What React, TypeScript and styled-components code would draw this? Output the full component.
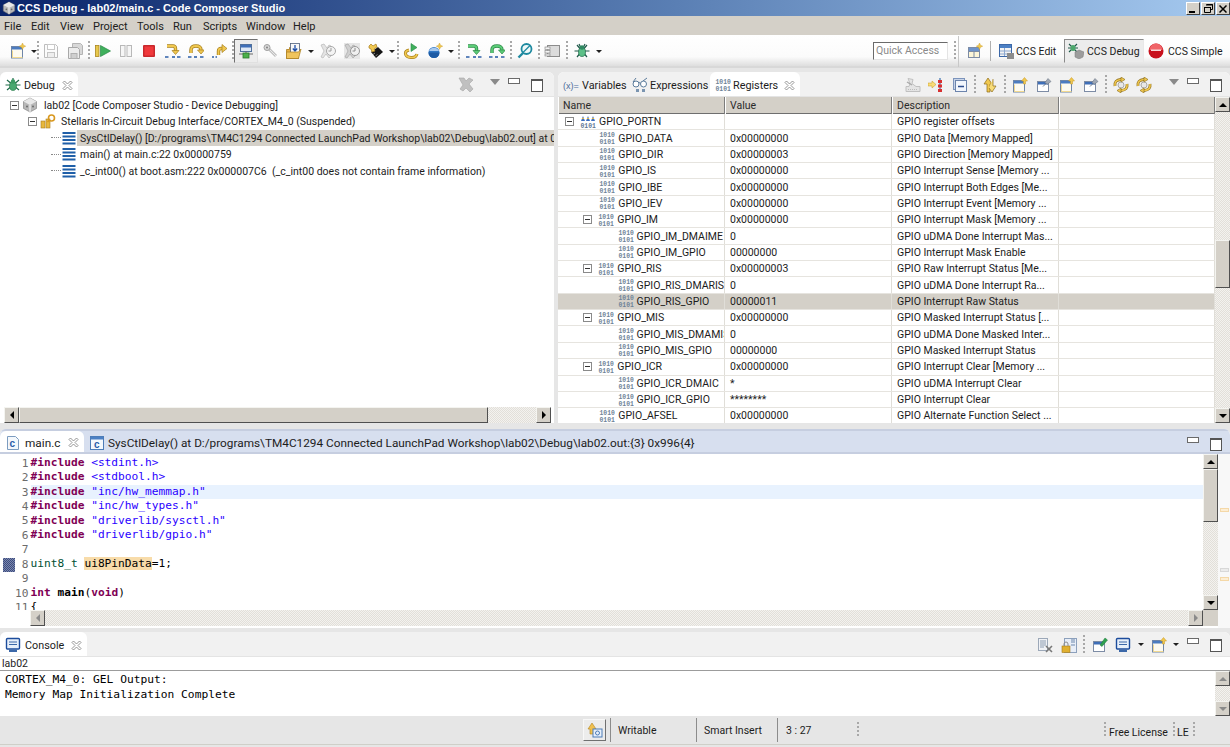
import React from 'react';
import styled, { createGlobalStyle } from 'styled-components';

const GlobalStyle = createGlobalStyle`
  html, body {
    margin: 0;
    padding: 0;
    background: #e6e6e6;
    overflow: hidden;
  }
  * { box-sizing: border-box; }
  #root { width: 1230px; height: 747px; }
`;

const UI = `"Roboto", "Liberation Sans", sans-serif`;
const MONO = `"DejaVu Sans Mono", "Liberation Mono", monospace`;

const Page = styled.div`
  width: 1230px;
  height: 747px;
  display: flex;
  flex-direction: column;
  background: #e6e6e6;
  font-family: ${UI};
  font-size: 10.5px;
  color: #1c1c1c;
  overflow: hidden;
`;

/* ---------- icons ---------- */

const Svg = ({ children, size = 16 }: any) => (
  <svg width={size} height={size} viewBox="0 0 16 16" style={{ display: 'block', flex: 'none' }}>
    {children}
  </svg>
);

const bits = (fill: string) => (
  <g fontFamily="Liberation Mono, monospace" fontSize="6.4" fontWeight="700" fill={fill}>
    <text x="0.5" y="7">1010</text>
    <text x="0.5" y="14">0101</text>
  </g>
);

// outlined arrow used by the step buttons
const Arrow = ({ d, head, fill, line }: { d: string; head: string; fill: string; line: string }) => (
  <>
    <path d={d} fill="none" stroke={line} strokeWidth="3.4" />
    <path d={d} fill="none" stroke={fill} strokeWidth="1.8" />
    <path d={head} fill={fill} stroke={line} strokeWidth=".7" />
  </>
);

const dashes = <path d="M0 14h3.500M12 14h3.500" stroke="#2d5fa8" strokeWidth="1.6" />;

const window16 = (
  <>
    <rect x="1.500" y="3.500" width="11" height="11.500" fill="#fdfaf0" stroke="#6f86a8" />
    <rect x="2" y="4" width="10" height="2.500" fill="#4c7cc0" />
    <path d="M12.500 14.500h-10v-7" fill="none" stroke="#f0d890" />
  </>
);

const star = <path d="M12.500 0l1 2.200 2.200 1-2.200 1-1 2.200-1-2.200-2.200-1 2.200-1z" fill="#f0c850" stroke="#c89820" strokeWidth=".4" />;

const icons: Record<string, React.ReactNode> = {
  newfile: <>{window16}{star}</>,
  save: (
    <>
      <path d="M1.500 1.500h11l2 2v11h-13z" fill="#fbfbfb" stroke="#bcbcbc" />
      <rect x="4.500" y="1.500" width="7" height="5" fill="#fff" stroke="#c8c8c8" />
      <rect x="4.500" y="9.500" width="7" height="5" fill="#eee" stroke="#c4c4c4" />
    </>
  ),
  saveall: (
    <>
      <path d="M5.500 .5h8l2 2v9h-10z" fill="#d8d8d8" stroke="#b4b4b4" />
      <path d="M1.500 4.500h9l2 2v9h-11z" fill="#ececec" stroke="#a8a8a8" />
      <rect x="4" y="10.500" width="6" height="5" fill="#cfcfcf" stroke="#b0b0b0" />
    </>
  ),
  resume: (
    <>
      <rect x=".5" y="2.500" width="3.500" height="11" fill="#e8c84c" stroke="#a88420" strokeWidth=".8" />
      <path d="M5.500 2.500l10 5.500-10 5.500z" fill="#3fb05c" stroke="#2b8a46" strokeWidth=".7" />
    </>
  ),
  pause: (
    <>
      <rect x="2.500" y="2.500" width="4.500" height="11" fill="#f6f6f6" stroke="#b8b8b8" />
      <rect x="9" y="2.500" width="4.500" height="11" fill="#f6f6f6" stroke="#b8b8b8" />
    </>
  ),
  stop: (
    <>
      <rect x="2" y="2" width="12" height="12" rx="1" fill="#c8282c" />
      <rect x="3.500" y="3.500" width="9" height="9" fill="#f0393c" />
    </>
  ),
  into: (
    <>
      <Arrow d="M2 3h6q2.500 0 2.500 2.500V8" head="M7 7.500h7l-3.500 4z" fill="#f0c850" line="#a8801c" />
      {dashes}
      <path d="M7 14h3" stroke="#2d5fa8" strokeWidth="1.600" />
    </>
  ),
  over: (
    <>
      <Arrow d="M3 10V7q0-4 5-4t5 4" head="M9.500 7h7l-3.500 4z" fill="#f0c850" line="#a8801c" />
      {dashes}
      <path d="M6 14h3" stroke="#2d5fa8" strokeWidth="1.600" />
    </>
  ),
  ret: (
    <>
      <Arrow d="M6.500 12V8q0-2.500 2.500-2.500h1" head="M10 1.500l5 4-5 4z" fill="#f0c850" line="#a8801c" />
      <path d="M0 14h2M3.500 14h1.500" stroke="#2d5fa8" strokeWidth="1.600" />
    </>
  ),
  target: (
    <>
      <rect x="2.500" y="1.500" width="11" height="7" fill="#dfe8f4" stroke="#50709c" />
      <rect x="3" y="2" width="10" height="2.500" fill="#3f6fb8" />
      <path d="M1 11h14M8 8v3" stroke="#6a6a6a" />
      <rect x="5" y="10" width="6" height="5" fill="#4cb04c" stroke="#2a7a2a" strokeWidth=".8" />
    </>
  ),
  wrench: (
    <>
      <path d="M6 5l8 8" stroke="#c0c0c0" strokeWidth="3" />
      <path d="M6 5l8 8" stroke="#e8e8e8" strokeWidth="1" />
      <circle cx="5" cy="4.500" r="3" fill="#d8d8d8" stroke="#a0a0a0" />
      <circle cx="5" cy="4.500" r="1" fill="#808080" />
    </>
  ),
  load: (
    <>
      <path d="M.5 6.500h3v-2h9v11h-12z" fill="#e8b040" stroke="#a87c20" strokeWidth=".8" />
      <rect x="4.500" y=".5" width="9" height="10" fill="#f8f8f8" stroke="#50607c" strokeWidth=".8" />
      <path d="M9 2v6M6.800 5.500L9 8l2.200-2.500" stroke="#1f4fa8" fill="none" strokeWidth="1.300" />
      <path d="M.5 9h12l2.500-3-2.500 9.500h-12z" fill="#f0c45c" stroke="#a87c20" strokeWidth=".7" />
    </>
  ),
  grayx1: (
    <>
      <path d="M1 2l3-1 3 4 2-3 2 1-3 5 3 5-2 2-3-4-3 4-2-1 3-6z" fill="#e4e4e4" stroke="#b8b8b8" strokeWidth=".7" />
      <circle cx="11" cy="8" r="4.500" fill="#f4f4f4" stroke="#a8a8a8" />
      <path d="M11 5v3h-2.500" fill="none" stroke="#9c9c9c" />
    </>
  ),
  grayx2: (
    <>
      <rect x="0" y="0" width="16" height="16" fill="#e6e6e6" />
      <path d="M1 2l3-1 3 4 2-3 2 1-3 5 3 5-2 2-3-4-3 4-2-1 3-6z" fill="#d0d0d0" stroke="#a8a8a8" strokeWidth=".7" />
      <circle cx="11" cy="8" r="4.500" fill="#f0f0f0" stroke="#989898" />
      <path d="M11 5v3h-2.500" fill="none" stroke="#8c8c8c" />
    </>
  ),
  chip: (
    <>
      <path d="M3 9l7-5 5 5-7 6z" fill="#161616" />
      <path d="M5 11.500l2-1.500M7.500 13l2-1.500" stroke="#888" />
      <path d="M1 3l2-2 2 2 3-2 1 3-3 2 1 2-3 1-1-3-2-1z" fill="#f0c850" stroke="#a87c20" strokeWidth=".7" />
    </>
  ),
  restart: (
    <>
      <path d="M8 .5l6 4-6 4z" fill="#3fb05c" stroke="#2b8a46" strokeWidth=".6" />
      <path d="M6 7q-4 1-3.500 4t5.500 3.500 6-3.500" fill="none" stroke="#a8801c" strokeWidth="3" />
      <path d="M6 7q-4 1-3.500 4t5.500 3.500 6-3.500" fill="none" stroke="#f0c850" strokeWidth="1.600" />
    </>
  ),
  ball: (
    <>
      <circle cx="7" cy="9.500" r="5.500" fill="#2f76c4" />
      <path d="M1.500 9.500h11a5.500 5.500 0 0 1-11 0" fill="#1c5aa4" />
      <path d="M2 8a5.500 5.500 0 0 1 10 0z" fill="#a8c8ec" />
      {star}
    </>
  ),
  asmInto: (
    <>
      <Arrow d="M2 3h6q2.500 0 2.500 2.500V8" head="M7 7.500h7l-3.500 4z" fill="#5ccc78" line="#2b8a46" />
      {dashes}
      <path d="M7 14h3" stroke="#2d5fa8" strokeWidth="1.600" />
    </>
  ),
  asmOver: (
    <>
      <Arrow d="M3 10V7q0-4 5-4t5 4" head="M9.500 7h7l-3.500 4z" fill="#5ccc78" line="#2b8a46" />
      {dashes}
      <path d="M6 14h3" stroke="#2d5fa8" strokeWidth="1.600" />
    </>
  ),
  search: (
    <>
      <circle cx="9.500" cy="6" r="5" fill="#f0fafa" stroke="#1e8aa0" strokeWidth="1.800" />
      <path d="M6 10L1.500 14.500" stroke="#1e8aa0" strokeWidth="2.400" />
      <path d="M13 2.500L6 9.500" stroke="#1e8aa0" strokeWidth="1.200" />
    </>
  ),
  note: (
    <>
      <rect x="3.500" y="2.500" width="12" height="11" fill="#dcdcdc" stroke="#8c8c8c" />
      <rect x="1" y="4" width="5" height="2.500" fill="#f4f4f4" stroke="#8c8c8c" strokeWidth=".7" />
      <rect x="1" y="7.500" width="5" height="2.500" fill="#f4f4f4" stroke="#8c8c8c" strokeWidth=".7" />
      <rect x="1" y="11" width="5" height="2" fill="#f4f4f4" stroke="#8c8c8c" strokeWidth=".7" />
    </>
  ),
  bug: (
    <>
      <path d="M3 2l10 12M13 2L3 14M.5 8h15M5 1l1.500 3M11 1L9.500 4" stroke="#1f5a4a" strokeWidth="1.200" />
      <ellipse cx="8" cy="9" rx="3.500" ry="4.500" fill="#5cc088" stroke="#1f6a4a" strokeWidth=".7" />
      <circle cx="8" cy="4.500" r="2.200" fill="#2f8a62" />
    </>
  ),
  persp: (
    <>
      <rect x="1.500" y="4.500" width="11" height="10" fill="#fdf6d8" stroke="#7d8ca5" />
      <path d="M1.500 8.500h11M7 8.500v6" stroke="#7d8ca5" />
      <rect x="2" y="5" width="10" height="3" fill="#6e94cc" />
      {star}
    </>
  ),
  edit: (
    <>
      <rect x="1.500" y="1.500" width="12" height="12" fill="#f4f4f4" stroke="#3c68a8" />
      <rect x="2" y="2" width="11" height="3" fill="#4c80c4" />
      <path d="M6.500 5v8M2 8h11M2 11h11" stroke="#8ca8d0" />
      <rect x="9" y="10" width="7" height="6" fill="#8c8c8c" />
    </>
  ),
  debugP: (
    <>
      <path d="M1 1l8 8M9 1L1 9M0 5h10" stroke="#1f5a4a" strokeWidth="1.100" />
      <ellipse cx="5" cy="5" rx="2.500" ry="3" fill="#4ca86c" />
      <path d="M7 9l4-2 5 2-1 5-4 2-4-2z" fill="#9c9c9c" stroke="#787878" strokeWidth=".5" />
    </>
  ),
  simple: (
    <>
      <circle cx="8" cy="8" r="7.500" fill="#c8101c" />
      <path d="M1.500 7a6.500 6.500 0 0 1 13 0z" fill="#f06468" />
      <rect x="3" y="6.500" width="10" height="1.500" fill="#f8d8d8" />
    </>
  ),
  bug16: (
    <>
      <path d="M2 3l12 10M14 3L2 13M0.500 8h15M8 1v3" stroke="#1f6a4a" strokeWidth="1.200" />
      <ellipse cx="8" cy="9" rx="3.500" ry="4.500" fill="#48a870" stroke="#2a7a4a" strokeWidth=".6" />
      <circle cx="8" cy="4.500" r="2.200" fill="#3a9a62" />
    </>
  ),
  grayx: (
    <path d="M1 1h5l2 3 3-3 4 2-4 4 4 5-3 3-4-4-3 3-3-2 3-4z" fill="#c0c0c0" stroke="#a4a4a4" strokeWidth=".6" />
  ),
  glasses: (
    <>
      <circle cx="4" cy="7" r="3" fill="#fff" stroke="#5c7c9c" />
      <circle cx="11.500" cy="7" r="3" fill="#fff" stroke="#5c7c9c" />
      <path d="M7 6q1-1 1.500 0M1 5l3-4M11 4l4-3" stroke="#5c7c9c" fill="none" />
      <path d="M4 12h3v3H4zM10 12h3v3h-3z" fill="#7a94b0" />
    </>
  ),
  reg: bits('#6f8498'),
  regGroup: (
    <>
      <path d="M1 7l2-5 2 5zM6 7l2-5 2 5zM11 7l2-5 2 5z" fill="#3d6fc0" />
      <path d="M2 4.500h2M7 4.500h2M12 4.500h2" stroke="#e8b83c" />
      <g fontFamily="Liberation Mono, monospace" fontSize="6.400" fontWeight="700" fill="#5f7896">
        <text x="0.500" y="14">0101</text>
      </g>
    </>
  ),
  regOff: (
    <>
      <path d="M3 1.500l5 1-1 4 4 3h4v5H1v-5h3l1-3z" fill="#e4e4e4" stroke="#c0c0c0" />
      <path d="M3 12.500h9" stroke="#bcbcbc" strokeDasharray="1 1" />
      <path d="M2 5l5 3" stroke="#a8a8a8" strokeWidth="1.400" />
    </>
  ),
  arrowTree: (
    <>
      <path d="M0 6h4V4l4 3.500L4 11V9H0z" fill="#f8dc78" stroke="#c89820" strokeWidth=".5" />
      <path d="M12 1v14" stroke="#3a6fb0" strokeWidth="1.200" />
      <rect x="10" y="3" width="4" height="3" fill="#d83030" />
      <rect x="10" y="7.500" width="4" height="3" fill="#d83030" />
      <rect x="10" y="12" width="4" height="3" fill="#d83030" />
    </>
  ),
  collapse: (
    <>
      <rect x="1.500" y="1.500" width="11" height="11" fill="#c8d4e8" stroke="#7c94bc" />
      <rect x="3.500" y="3.500" width="11" height="11" fill="#f2f6fc" stroke="#6c84ac" />
      <path d="M6 9.500h6" stroke="#2c4c8c" strokeWidth="1.600" />
    </>
  ),
  sync: (
    <>
      <path d="M5 15V7H2l4-6 4 6H8v8z" fill="#f0c850" stroke="#8c6c18" strokeWidth=".7" />
      <path d="M11 2v7h3l-4 6-3-4" fill="#f8dc78" stroke="#8c6c18" strokeWidth=".7" />
    </>
  ),
  newgroup: <>{window16}<path d="M12.500 .5l3 3.500h-2v3h-2V4h-2z" fill="#f0c850" stroke="#c89820" strokeWidth=".5" /></>,
  pin: (
    <>
      <rect x="1.500" y="4.500" width="11" height="10" fill="#fff" stroke="#7d8ca5" />
      <rect x="2" y="5" width="10" height="2.500" fill="#3f6fb8" />
      <path d="M7 9.500l3-3-1-1 3-4 3 3-4 3-1-1-3 3z" fill="#a0a8b4" stroke="#5c6878" strokeWidth=".5" />
    </>
  ),
  pinGreen: (
    <>
      <rect x="1.500" y="4.500" width="11" height="10" fill="#fff" stroke="#7d8ca5" />
      <rect x="2" y="5" width="10" height="2.500" fill="#3f6fb8" />
      <path d="M8 8l5-7 2.500 2L10 9.500z" fill="#2fa050" stroke="#1f7a38" strokeWidth=".5" />
    </>
  ),
  refresh: (
    <>
      <circle cx="8" cy="8" r="3" fill="#e8e8e8" stroke="#a8a8a8" />
      <path d="M2 9Q1 3 8 2.500" fill="none" stroke="#8c6c18" strokeWidth="2.800" />
      <path d="M2 9Q1 3 8 2.500" fill="none" stroke="#f0c850" strokeWidth="1.500" />
      <path d="M14 7q1 6-6 6.500" fill="none" stroke="#8c6c18" strokeWidth="2.800" />
      <path d="M14 7q1 6-6 6.500" fill="none" stroke="#f0c850" strokeWidth="1.500" />
      <path d="M8 0l4 2.500L8 5zM8 11l-4 2.500L8 16z" fill="#f0c850" stroke="#8c6c18" strokeWidth=".6" />
    </>
  ),
  clearLog: (
    <>
      <rect x="1.500" y="1.500" width="9" height="12" fill="#f0f2f6" stroke="#9ca8b8" />
      <path d="M3 4h6M3 6h6M3 8h6M3 10h4" stroke="#8c9cb0" />
      <path d="M9 9l6 6M15 9l-6 6" stroke="#787878" strokeWidth="1.600" />
    </>
  ),
  scrollLock: (
    <>
      <rect x="3.500" y="1.500" width="12" height="14" fill="#e8eef8" stroke="#8ca0bc" />
      <path d="M10 3h4M10 5h4M10 8h4" stroke="#6c88ac" />
      <rect x="1" y="9" width="8" height="6.500" fill="#e0b030" stroke="#a47a18" strokeWidth=".6" />
      <path d="M3 9V7a2 2 0 0 1 4 0v2" fill="none" stroke="#8c8c8c" />
    </>
  ),
  console: (
    <>
      <rect x="1.500" y="1.500" width="13" height="10.500" rx="1" fill="#e8f0fa" stroke="#1c4c9c" strokeWidth="1.400" />
      <path d="M4 5h8M4 7.500h8" stroke="#3c68a8" />
      <rect x="4" y="12.500" width="8" height="2.500" fill="#3c68a8" />
    </>
  ),
  switchWs: (
    <>
      <path d="M1 7l4-6 4 6H7v5H3V7z" fill="#f0c050" stroke="#b08420" strokeWidth=".6" />
      <rect x="6" y="7" width="9" height="8" fill="#e8f0fa" stroke="#4c7cb8" />
      <circle cx="10.500" cy="11" r="2" fill="none" stroke="#4c7cb8" />
    </>
  ),
  cfile: (
    <>
      <path d="M2.500 1.500h8l3 3v10h-11z" fill="#f4f8fc" stroke="#7c9cc0" />
      <text x="4.500" y="12" fontSize="10" fontWeight="700" fontFamily="Liberation Sans, sans-serif" fill="#2a5ca8">c</text>
    </>
  ),
  cwin: (
    <>
      <rect x="1.500" y="1.500" width="13" height="13" fill="#f4f8fc" stroke="#4c7cb8" />
      <rect x="2" y="2" width="12" height="2.500" fill="#4c80c4" />
      <text x="5" y="13" fontSize="10" fontWeight="700" fontFamily="Liberation Sans, sans-serif" fill="#2a5ca8">c</text>
    </>
  ),
  cube: (
    <>
      <path d="M8 1l6.500 3.500v7L8 15l-6.500-3.500v-7z" fill="#b8b8b8" stroke="#787878" strokeWidth=".6" />
      <path d="M1.500 4.500L8 8l6.500-3.500L8 1z" fill="#e8e8e8" />
      <path d="M8 8v7" stroke="#fff" />
      <circle cx="5" cy="9.500" r="1" fill="#6c6c6c" />
      <circle cx="11" cy="9.500" r="1" fill="#6c6c6c" />
    </>
  ),
  thread: (
    <>
      <rect x="1" y="7" width="4" height="7" fill="#e8b83c" stroke="#a87c20" strokeWidth=".6" />
      <rect x="6" y="5" width="4" height="9" fill="#e8b83c" stroke="#a87c20" strokeWidth=".6" />
      <circle cx="11.500" cy="4" r="3" fill="none" stroke="#d89820" strokeWidth="1.600" />
      <path d="M9.500 6l-2 2" stroke="#d89820" strokeWidth="1.600" />
    </>
  ),
  frame: <path d="M1.500 3h13M1.500 6.500h13M1.500 10h13M1.500 13.500h13" stroke="#1f5fa8" strokeWidth="2" />,
  vars: (
    <text x="0" y="11" fontSize="8.500" fontFamily="Liberation Sans, sans-serif" fill="#4c6c9c">(x)=</text>
  ),
};

const Icon = ({ n, size }: { n: string; size?: number }) => <Svg size={size}>{icons[n]}</Svg>;

/* ---------- title + menu ---------- */

const TitleBar = styled.div`
  height: 16px;
  flex: none;
  display: flex;
  align-items: center;
  padding-left: 2px;
  gap: 1px;
  background: linear-gradient(90deg, #0a246a 0%, #5a7fb4 55%, #a6caf0 100%);
  color: #fff;
  font-family: "Liberation Sans", sans-serif;
  font-weight: 700;
  font-size: 11px;
`;

const TitleText = styled.span`
  flex: 1;
  white-space: nowrap;
`;

const WinButtons = styled.div`
  display: flex;
  gap: 1px;
  align-self: flex-start;
  margin-top: 2px;
`;

const WinButton = styled.div`
  width: 14px;
  height: 13px;
  background: #d4d0c8;
  border: 1px solid;
  border-color: #fff #404040 #404040 #fff;
  display: flex;
  align-items: center;
  justify-content: center;
`;

const MenuBar = styled.div`
  height: 19px;
  flex: none;
  display: flex;
  align-items: center;
  padding: 1px 0 0 4px;
  background: #d4d0c8;
  font-size: 11px;
`;

const MenuItem = styled.span<{ $w: number }>`
  width: ${(p) => p.$w}px;
  flex: none;
  color: #202020;
`;

/* ---------- main toolbar ---------- */

const Toolbar = styled.div`
  height: 33px;
  flex: none;
  display: flex;
  align-items: center;
  background: linear-gradient(180deg, #ffffff 0%, #fbfbfb 70%, #dedede 100%);
  border-bottom: 2px solid #d8d8d8;
  padding: 1px 0 0 6px;
`;

const Tool = styled.div<{ $w?: number; $on?: boolean }>`
  width: ${(p) => p.$w ?? 23.4}px;
  height: ${(p) => (p.$on ? 24 : 20)}px;
  flex: none;
  display: flex;
  align-items: center;
  justify-content: center;
  ${(p) => p.$on && 'background: #ececec; border: 1px solid; border-color: #707070 #e0e0e0 #e0e0e0 #707070;'}
`;

const Drop = styled.div<{ $w?: number }>`
  width: ${(p) => p.$w ?? 9}px;
  flex: none;
  display: flex;
  justify-content: center;
  &::after {
    content: '';
    border-left: 3px solid transparent;
    border-right: 3px solid transparent;
    border-top: 3px solid #202020;
  }
`;

const Grip = styled.div<{ $w: number }>`
  width: ${(p) => p.$w}px;
  height: 20px;
  flex: none;
  display: flex;
  justify-content: center;
  &::after {
    content: '';
    width: 2px;
    height: 100%;
    background: repeating-linear-gradient(180deg, #a8a8a8 0 2px, transparent 2px 4px);
  }
`;

const Grow = styled.div`
  flex: 1;
`;

const QuickAccess = styled.div`
  width: 75px;
  height: 18px;
  margin-right: 5px;
  flex: none;
  background: #fff;
  border: 1px solid;
  border-color: #6a6a6a #e4e4e4 #e4e4e4 #6a6a6a;
  color: #8a8a8a;
  padding-left: 2px;
  line-height: 16px;
`;

const PerspectiveBar = styled.div`
  display: flex;
  align-items: center;
  height: 31px;
  margin-left: 2px;
  padding-left: 8px;
  width: 272px;
  flex: none;
  border-left: 1px solid #c8c8c8;
`;

const Divider = styled.div<{ $m?: number }>`
  width: 1px;
  height: 20px;
  flex: none;
  background: #b0b0b0;
  margin: 0 ${(p) => p.$m ?? 8}px;
`;

const Perspective = styled.div<{ $on?: boolean; $w: number; $pad: number }>`
  width: ${(p) => p.$w}px;
  height: 24px;
  flex: none;
  display: flex;
  align-items: center;
  gap: ${(p) => (p.$pad === 0 ? 2 : p.$pad)}px;
  padding-left: ${(p) => p.$pad}px;
  white-space: nowrap;
  ${(p) => p.$on && 'background: #ececec; border: 1px solid; border-color: #8a8a8a #e8e8e8 #e8e8e8 #8a8a8a;'}
`;

/* ---------- views ---------- */

const TopRow = styled.div`
  height: 351px;
  margin-top: 4px;
  flex: none;
  display: flex;
  gap: 4px;
`;

const View = styled.div<{ $w?: number }>`
  ${(p) => (p.$w ? `width: ${p.$w}px; flex: none;` : 'flex: 1; min-width: 0;')}
  display: flex;
  flex-direction: column;
  background: #fff;
  border-radius: 6px 6px 0 0;
  overflow: hidden;
`;

const TabBar = styled.div<{ $blue?: boolean }>`
  height: 25px;
  flex: none;
  display: flex;
  align-items: stretch;
  background: ${(p) => (p.$blue ? '#d7dfef' : '#f1f1f1')};
  ${(p) => (p.$blue ? 'border-top: 2px solid #c6cee0; border-bottom: 2px solid #c6cee0;' : 'border-bottom: 1px solid #e4e4e4;')}
`;

const Tab = styled.div<{ $on?: boolean; $w?: number; $gap?: number; $blue?: boolean }>`
  ${(p) => (p.$w ? `width: ${p.$w}px;` : '')}
  flex: none;
  display: flex;
  align-items: center;
  gap: ${(p) => p.$gap ?? 3}px;
  padding: 2px 0 0 5px;
  white-space: nowrap;
  font-size: ${(p) => (p.$blue ? 11.8 : 10.8)}px;
  ${(p) => p.$on && 'background: #fff; border-radius: 6px 6px 0 0;'}
`;

const TabClose = styled.span`
  margin-left: auto;
  margin-right: 5px;
  display: flex;
`;

const CloseX = () => (
  <svg width="11" height="11" viewBox="0 0 11 11" style={{ display: 'block' }}>
    <path d="M1 2.500L2.500 1 5.500 4 8.500 1 10 2.500 7 5.500 10 8.500 8.500 10 5.500 7 2.500 10 1 8.500 4 5.500z" fill="#fff" stroke="#7c7c7c" strokeWidth=".8" />
  </svg>
);

const ViewTools = styled.div<{ $r?: number }>`
  margin-left: auto;
  padding: 1px ${(p) => p.$r ?? 3}px 0 0;
  display: flex;
  align-items: center;
`;

const ViewMenu = styled.div`
  width: 15px;
  flex: none;
  display: flex;
  justify-content: center;
  align-self: flex-start;
  margin-top: 6px;
  &::after {
    content: '';
    width: 0;
    height: 0;
    border-left: 5px solid transparent;
    border-right: 5px solid transparent;
    border-top: 6px solid #8a8a8a;
  }
`;

const MinBtn = styled.div`
  width: 23px;
  flex: none;
  display: flex;
  justify-content: center;
  align-self: flex-start;
  margin-top: 5px;
  &::after {
    content: '';
    width: 10px;
    height: 4px;
    background: #fff;
    border: 1px solid #6a6a6a;
  }
`;

const MaxBtn = styled.div`
  width: 23px;
  flex: none;
  display: flex;
  justify-content: center;
  align-self: flex-start;
  margin-top: 6px;
  &::after {
    content: '';
    width: 10px;
    height: 10px;
    background: #fff;
    border: 1px solid #555;
    border-top-width: 2px;
  }
`;

const Body = styled.div`
  flex: 1;
  min-height: 0;
  display: flex;
  flex-direction: column;
  background: #fff;
`;

/* ---------- debug tree ---------- */

const TreeArea = styled.div`
  flex: 1;
  min-height: 0;
  overflow: hidden;
`;

const TreeRow = styled.div<{ $indent: number }>`
  height: 16.4px;
  display: flex;
  align-items: center;
  padding-left: ${(p) => p.$indent}px;
  white-space: nowrap;
`;

const TreeLabel = styled.span<{ $sel?: boolean }>`
  flex: 1;
  min-width: 0;
  overflow: hidden;
  height: 16.4px;
  line-height: 17px;
  padding-left: 3px;
  ${(p) => p.$sel && 'background: #d4d0c8;'}
`;

const Twist = styled.div`
  width: 9px;
  height: 9px;
  flex: none;
  border: 1px solid #8a8a8a;
  background: #fff;
  position: relative;
  &::after {
    content: '';
    position: absolute;
    left: 1px;
    right: 1px;
    top: 3px;
    height: 1px;
    background: #333;
  }
`;

const Dots = styled.div<{ $w: number }>`
  width: ${(p) => p.$w}px;
  flex: none;
  border-top: 1px dotted #8a8a8a;
`;

/* ---------- scrollbars ---------- */

const track = `background: repeating-conic-gradient(#e2dfd9 0 25%, #f3f2ef 0 50%) 0 0 / 2px 2px;`;

const VBar = styled.div`
  width: 15px;
  flex: none;
  display: flex;
  flex-direction: column;
  ${track}
`;

const HBar = styled.div`
  height: 16px;
  flex: none;
  display: flex;
  ${track}
`;

const DebugHBar = styled(HBar)`
  margin: 0 3px 0 4px;
`;

const EditorHBar = styled(HBar)`
  margin-left: 30px;
`;

const Thumb = styled.div`
  background: #d4d0c8;
  border: 1px solid;
  border-color: #f4f4f0 #505050 #505050 #f4f4f0;
`;

const ScrollBtn = styled(Thumb)<{ $dir: 'u' | 'd' | 'l' | 'r'; $off?: boolean }>`
  width: ${(p) => (p.$dir === 'u' || p.$dir === 'd' ? '100%' : '15px')};
  height: ${(p) => (p.$dir === 'u' || p.$dir === 'd' ? '15px' : '100%')};
  flex: none;
  display: flex;
  align-items: center;
  justify-content: center;
  &::after {
    content: '';
    width: 0;
    height: 0;
    ${(p) => {
      const c = p.$off ? '#8a8a8a' : '#000';
      if (p.$dir === 'u') return `border: 4px solid transparent; border-top: 0; border-bottom-color: ${c};`;
      if (p.$dir === 'd') return `border: 4px solid transparent; border-bottom: 0; border-top-color: ${c};`;
      if (p.$dir === 'l') return `border: 4px solid transparent; border-left: 0; border-right-color: ${c};`;
      return `border: 4px solid transparent; border-right: 0; border-left-color: ${c};`;
    }}
  }
`;

const VThumb = styled(Thumb)<{ $top: number; $h: number }>`
  flex: none;
  width: 100%;
  margin-top: ${(p) => p.$top}px;
  height: ${(p) => p.$h}px;
`;

const HThumb = styled(Thumb)<{ $w: number }>`
  flex: none;
  height: 100%;
  width: ${(p) => p.$w}px;
`;

const Corner = styled.div`
  width: 15px;
  flex: none;
  background: #d4d0c8;
`;

/* ---------- registers table ---------- */

const TableWrap = styled.div`
  flex: 1;
  min-height: 0;
  display: flex;
`;

const Table = styled.div`
  flex: 1;
  min-width: 0;
  overflow: hidden;
`;

const columns = `grid-template-columns: 167px 167px 167px 1fr;`;

const HeadRow = styled.div`
  height: 17px;
  display: grid;
  ${columns}
  background: #d4d0c8;
  border-bottom: 1px solid #6e6e6e;
`;

const HeadCell = styled.div`
  padding-left: 5px;
  line-height: 17px;
  border-right: 1px solid #7c7c7c;
  box-shadow: inset 1px 0 0 #fff;
  color: #2a2a2a;
`;

const Row = styled.div<{ $sel?: boolean }>`
  height: 16.35px;
  display: grid;
  ${columns}
  border-bottom: 1px solid #e6e4df;
  ${(p) => p.$sel && 'background: #d4d0c8;'}
`;

const Cell = styled.div`
  min-width: 0;
  overflow: hidden;
  white-space: nowrap;
  padding-left: 5px;
  line-height: 17px;
  border-right: 1px solid #e0ded8;
  display: flex;
  align-items: center;
`;

const NameCell = styled(Cell)<{ $level: number; $open: boolean }>`
  padding-left: ${(p) => p.$level * 18.3 + 23 - (p.$open ? 17 : 0)}px;
  gap: 3px;
`;

const TwistBox = styled.div`
  margin-right: 3px;
  margin-left: 1px;
  display: flex;
`;

/* ---------- editor ---------- */

const EditorView = styled(View)`
  height: 199px;
  flex: none;
  margin-top: 6px;
`;

const EditorBody = styled.div`
  flex: 1;
  min-height: 0;
  display: flex;
  background: #fff;
`;

const EditorMain = styled.div`
  flex: 1;
  min-width: 0;
  display: flex;
  flex-direction: column;
  padding-bottom: 2px;
`;

const EditorTop = styled.div`
  flex: 1;
  min-height: 0;
  display: flex;
`;

const Code = styled.div`
  flex: 1;
  min-width: 0;
  overflow: hidden;
  padding-top: 2px;
  font-family: ${MONO};
  font-size: 11.2px;
`;

const CodeLine = styled.div`
  height: 14.45px;
  display: flex;
  align-items: center;
  white-space: pre;
`;

const LineNo = styled.div<{ $bp?: boolean }>`
  width: 30.5px;
  flex: none;
  text-align: right;
  padding-right: 2px;
  color: #6c6c6c;
  position: relative;
  ${(p) =>
    p.$bp &&
    `&::before {
      content: '';
      position: absolute;
      left: 3px;
      top: 0;
      width: 12px;
      height: 14px;
      background: repeating-conic-gradient(#3c4c80 0 25%, #7c88ac 0 50%) 0 0 / 2px 2px;
    }`}
`;

const CodeText = styled.div<{ $hl?: boolean }>`
  flex: 1;
  height: 100%;
  line-height: 14.45px;
  color: #000;
  ${(p) => p.$hl && 'background: #e8f2fe;'}
`;

const Kw = styled.span`
  color: #7f0055;
  font-weight: 700;
`;

const Str = styled.span`
  color: #2a00ff;
`;

const TypeName = styled.span`
  color: #005032;
`;

const Occur = styled.span`
  background: #f8dcaa;
`;

const Bold = styled.span`
  font-weight: 700;
`;

const Ruler = styled.div`
  width: 12px;
  flex: none;
  background: #f8f8f8;
  display: flex;
  flex-direction: column;
  align-items: center;
`;

const RulerMark = styled.div<{ $top: number; $grey?: boolean }>`
  width: 9px;
  height: 4px;
  flex: none;
  margin-top: ${(p) => p.$top}px;
  background: ${(p) => (p.$grey ? '#ececec' : '#fdeed4')};
  border: 1px solid ${(p) => (p.$grey ? '#d8d8d8' : '#f4d8a8')};
`;

/* ---------- console + status ---------- */

const ConsoleView = styled(View)`
  height: 84px;
  flex: none;
  margin-top: 4px;
`;

const ConsoleName = styled.div`
  height: 13px;
  flex: none;
  line-height: 13px;
  padding-left: 2px;
  border-bottom: 1px solid #9c9c9c;
  background: #fff;
  box-sizing: content-box;
`;

const ConsoleBody = styled.div`
  flex: 1;
  min-height: 0;
  display: flex;
`;

const ConsoleText = styled.pre`
  flex: 1;
  margin: 0;
  padding: 2px 0 0 5px;
  font-family: ${MONO};
  font-size: 11.25px;
  line-height: 14.5px;
  color: #000;
`;

const StatusBar = styled.div`
  height: 29px;
  flex: none;
  display: flex;
  align-items: center;
  background: #e6e6e6;
  border-bottom: 1px solid #cfcfc8;
`;

const StatusBtn = styled.div`
  width: 23px;
  height: 22px;
  flex: none;
  margin: 0 4px 0 583px;
  background: #ececec;
  border: 1px solid;
  border-color: #f8f8f8 #707070 #707070 #f8f8f8;
  display: flex;
  align-items: center;
  justify-content: center;
`;

const StatusCell = styled.div<{ $w: number; $pad?: number }>`
  width: ${(p) => p.$w}px;
  height: 24px;
  flex: none;
  line-height: 26px;
  padding-left: ${(p) => p.$pad ?? 7}px;
  white-space: nowrap;
  border-left: 1px solid #8c8c8c;
`;

const StatusGrip = styled(Grip)`
  height: 16px;
`;

const StatusText = styled.div<{ $w: number; $pad: number }>`
  width: ${(p) => p.$w}px;
  flex: none;
  white-space: nowrap;
  padding: 4px 0 0 ${(p) => p.$pad}px;
`;

/* ---------- data ---------- */

const menus: [string, number][] = [
  ['File', 27], ['Edit', 29], ['View', 33], ['Project', 44], ['Tools', 36], ['Run', 30], ['Scripts', 43], ['Window', 47], ['Help', 30],
];

type Item = { i?: string; d?: number; g?: number; w?: number; on?: boolean };

const toolbarItems: Item[] = [
  { i: 'newfile', w: 24 }, { d: 7 }, { g: 2 },
  { i: 'save', w: 24 }, { i: 'saveall', w: 24 }, { g: 4 },
  { i: 'resume' }, { i: 'pause' }, { i: 'stop' }, { i: 'into' }, { i: 'over' }, { i: 'ret' }, { g: 3 },
  { i: 'target', w: 24, on: true }, { i: 'wrench', w: 24 }, { i: 'load' }, { d: 10 },
  { i: 'grayx1', w: 24 }, { i: 'grayx2', w: 24 }, { i: 'chip', w: 24 }, { d: 9 }, { g: 2 },
  { i: 'restart', w: 24 }, { i: 'ball', w: 24 }, { d: 9 }, { g: 6 },
  { i: 'asmInto', w: 24 }, { i: 'asmOver' }, { g: 4 },
  { i: 'search', w: 24 }, { g: 3 },
  { i: 'note', w: 24 }, { g: 6 },
  { i: 'bug', w: 24 }, { d: 9 },
];

const regTools: Item[] = [
  { i: 'regOff' }, { i: 'arrowTree' }, { i: 'collapse' }, { g: 7 },
  { i: 'sync' }, { g: 7 },
  { i: 'newgroup' }, { i: 'pin' }, { i: 'newgroup' }, { i: 'pin' }, { g: 7 },
  { i: 'refresh' }, { i: 'refresh' },
];

const consoleTools: Item[] = [
  { i: 'clearLog' }, { i: 'scrollLock' }, { g: 8 },
  { i: 'pinGreen' }, { i: 'console' }, { d: 12 }, { i: 'newgroup', w: 24 }, { d: 10 },
];

type Reg = { name: string; value: string; desc: string; level: number; open?: boolean; group?: boolean; sel?: boolean };

const regs: Reg[] = [
  { name: 'GPIO_PORTN', value: '', desc: 'GPIO register offsets', level: 0, open: true, group: true },
  { name: 'GPIO_DATA', value: '0x00000000', desc: 'GPIO Data [Memory Mapped]', level: 1 },
  { name: 'GPIO_DIR', value: '0x00000003', desc: 'GPIO Direction [Memory Mapped]', level: 1 },
  { name: 'GPIO_IS', value: '0x00000000', desc: 'GPIO Interrupt Sense [Memory ...', level: 1 },
  { name: 'GPIO_IBE', value: '0x00000000', desc: 'GPIO Interrupt Both Edges [Me...', level: 1 },
  { name: 'GPIO_IEV', value: '0x00000000', desc: 'GPIO Interrupt Event [Memory ...', level: 1 },
  { name: 'GPIO_IM', value: '0x00000000', desc: 'GPIO Interrupt Mask [Memory ...', level: 1, open: true },
  { name: 'GPIO_IM_DMAIME', value: '0', desc: 'GPIO uDMA Done Interrupt Mas...', level: 2 },
  { name: 'GPIO_IM_GPIO', value: '00000000', desc: 'GPIO Interrupt Mask Enable', level: 2 },
  { name: 'GPIO_RIS', value: '0x00000003', desc: 'GPIO Raw Interrupt Status [Me...', level: 1, open: true },
  { name: 'GPIO_RIS_DMARIS', value: '0', desc: 'GPIO uDMA Done Interrupt Ra...', level: 2 },
  { name: 'GPIO_RIS_GPIO', value: '00000011', desc: 'GPIO Interrupt Raw Status', level: 2, sel: true },
  { name: 'GPIO_MIS', value: '0x00000000', desc: 'GPIO Masked Interrupt Status [...', level: 1, open: true },
  { name: 'GPIO_MIS_DMAMIS', value: '0', desc: 'GPIO uDMA Done Masked Inter...', level: 2 },
  { name: 'GPIO_MIS_GPIO', value: '00000000', desc: 'GPIO Masked Interrupt Status', level: 2 },
  { name: 'GPIO_ICR', value: '0x00000000', desc: 'GPIO Interrupt Clear [Memory ...', level: 1, open: true },
  { name: 'GPIO_ICR_DMAIC', value: '*', desc: 'GPIO uDMA Interrupt Clear', level: 2 },
  { name: 'GPIO_ICR_GPIO', value: '********', desc: 'GPIO Interrupt Clear', level: 2 },
  { name: 'GPIO_AFSEL', value: '0x00000000', desc: 'GPIO Alternate Function Select ...', level: 1 },
];

const includes = ['<stdint.h>', '<stdbool.h>', '"inc/hw_memmap.h"', '"inc/hw_types.h"', '"driverlib/sysctl.h"', '"driverlib/gpio.h"'];

const renderTools = (items: Item[]) =>
  items.map((it, k) => {
    if (it.i) return <Tool key={k} $w={it.w} $on={it.on}><Icon n={it.i} /></Tool>;
    if (it.d) return <Drop key={k} $w={it.d} />;
    return <Grip key={k} $w={it.g ?? 3} />;
  });

export default function App() {
  return (
    <Page>
      <GlobalStyle />
      <TitleBar>
        <Icon n="cube" size={14} />
        <TitleText>CCS Debug - lab02/main.c - Code Composer Studio</TitleText>
        <WinButtons>
          <WinButton>
            <svg width="8" height="8" viewBox="0 0 8 8"><rect x="0" y="6" width="6" height="2" fill="#000" /></svg>
          </WinButton>
          <WinButton>
            <svg width="9" height="9" viewBox="0 0 9 9"><path d="M2.500.5h6v5h-2M.5 3.500h6v5h-6z" fill="none" stroke="#000" /><path d="M2 1h7M0 3.500h7" stroke="#000" /></svg>
          </WinButton>
          <WinButton>
            <svg width="8" height="8" viewBox="0 0 8 8"><path d="M.5.5l7 7M7.500.5l-7 7" stroke="#000" strokeWidth="1.500" /></svg>
          </WinButton>
        </WinButtons>
      </TitleBar>

      <MenuBar>
        {menus.map(([m, w]) => <MenuItem key={m} $w={w}>{m}</MenuItem>)}
      </MenuBar>

      <Toolbar>
        {renderTools(toolbarItems)}
        <Grow />
        <QuickAccess>Quick Access</QuickAccess>
        <Grip $w={3} />
        <PerspectiveBar>
          <Icon n="persp" />
          <Divider $m={7} />
          <Perspective $w={66} $pad={0}><Icon n="edit" />CCS Edit</Perspective>
          <Perspective $w={80} $pad={3} $on><Icon n="debugP" />CCS Debug</Perspective>
          <Perspective $w={76} $pad={4}><Icon n="simple" />CCS Simple</Perspective>
        </PerspectiveBar>
      </Toolbar>

      <TopRow>
        <View $w={554}>
          <TabBar>
            <Tab $on $w={78}>
              <Icon n="bug16" />Debug
              <TabClose><CloseX /></TabClose>
            </Tab>
            <ViewTools $r={6}>
              <Tool $w={20}><Icon n="grayx" /></Tool>
              <Tool $w={11} />
              <ViewMenu />
              <MinBtn />
              <MaxBtn />
            </ViewTools>
          </TabBar>
          <Body>
            <TreeArea>
              <TreeRow $indent={10}>
                <Twist /><Tool $w={22}><Icon n="cube" /></Tool>
                <TreeLabel>lab02 [Code Composer Studio - Device Debugging]</TreeLabel>
              </TreeRow>
              <TreeRow $indent={28}>
                <Twist /><Tool $w={21}><Icon n="thread" /></Tool>
                <TreeLabel>Stellaris In-Circuit Debug Interface/CORTEX_M4_0 (Suspended)</TreeLabel>
              </TreeRow>
              <TreeRow $indent={51}>
                <Dots $w={10} /><Tool $w={16}><Icon n="frame" /></Tool>
                <TreeLabel $sel>SysCtlDelay() [D:/programs\TM4C1294 Connected LaunchPad Workshop\lab02\Debug\lab02.out] at 0x00000996</TreeLabel>
              </TreeRow>
              <TreeRow $indent={51}>
                <Dots $w={10} /><Tool $w={16}><Icon n="frame" /></Tool>
                <TreeLabel>main() at main.c:22 0x00000759</TreeLabel>
              </TreeRow>
              <TreeRow $indent={51}>
                <Dots $w={10} /><Tool $w={16}><Icon n="frame" /></Tool>
                <TreeLabel>_c_int00() at boot.asm:222 0x000007C6&nbsp;&nbsp;(_c_int00 does not contain frame information)</TreeLabel>
              </TreeRow>
            </TreeArea>
            <DebugHBar>
              <ScrollBtn $dir="l" />
              <HThumb $w={469} />
              <Grow />
              <ScrollBtn $dir="r" />
            </DebugHBar>
          </Body>
        </View>

        <View>
          <TabBar>
            <Tab $w={69} $gap={2}><Icon n="vars" size={17} />Variables</Tab>
            <Tab $w={83} $gap={2}><Icon n="glasses" />Expressions</Tab>
            <Tab $on $w={90} $gap={2}>
              <Icon n="reg" />Registers
              <TabClose><CloseX /></TabClose>
            </Tab>
            <ViewTools>
              {renderTools(regTools)}
              <Tool $w={10} />
              <ViewMenu />
              <MinBtn />
              <MaxBtn />
            </ViewTools>
          </TabBar>
          <TableWrap>
            <Table>
              <HeadRow>
                <HeadCell>Name</HeadCell>
                <HeadCell>Value</HeadCell>
                <HeadCell>Description</HeadCell>
                <HeadCell />
              </HeadRow>
              {regs.map((r) => (
                <Row key={r.name} $sel={r.sel}>
                  <NameCell $level={r.level} $open={!!r.open}>
                    {r.open && <TwistBox><Twist /></TwistBox>}
                    <Icon n={r.group ? 'regGroup' : 'reg'} />
                    {r.name}
                  </NameCell>
                  <Cell>{r.value}</Cell>
                  <Cell>{r.desc}</Cell>
                  <Cell />
                </Row>
              ))}
            </Table>
            <VBar>
              <ScrollBtn $dir="u" />
              <VThumb $top={128} $h={48} />
              <Grow />
              <ScrollBtn $dir="d" />
            </VBar>
          </TableWrap>
        </View>
      </TopRow>

      <EditorView>
        <TabBar $blue>
          <Tab $on $blue $w={84} $gap={4}>
            <Icon n="cfile" />main.c
            <TabClose><CloseX /></TabClose>
          </Tab>
          <Tab $blue $gap={3}>
            <Icon n="cwin" />SysCtlDelay() at D:/programs\TM4C1294 Connected LaunchPad Workshop\lab02\Debug\lab02.out:{'{3}'} 0x996{'{4}'}
          </Tab>
          <ViewTools>
            <MinBtn />
            <MaxBtn />
          </ViewTools>
        </TabBar>
        <EditorBody>
          <EditorMain>
            <EditorTop>
              <Code>
                {includes.map((f, i) => (
                  <CodeLine key={f}>
                    <LineNo>{i + 1}</LineNo>
                    <CodeText $hl={i === 2}><Kw>#include</Kw> <Str>{f}</Str></CodeText>
                  </CodeLine>
                ))}
                <CodeLine><LineNo>7</LineNo><CodeText /></CodeLine>
                <CodeLine>
                  <LineNo $bp>8</LineNo>
                  <CodeText><TypeName>uint8_t</TypeName> <Occur>ui8PinData</Occur>=1;</CodeText>
                </CodeLine>
                <CodeLine><LineNo>9</LineNo><CodeText /></CodeLine>
                <CodeLine>
                  <LineNo>10</LineNo>
                  <CodeText><Kw>int</Kw> <Bold>main</Bold>(<Kw>void</Kw>)</CodeText>
                </CodeLine>
                <CodeLine><LineNo>11</LineNo><CodeText>{'{'}</CodeText></CodeLine>
              </Code>
              <VBar>
                <ScrollBtn $dir="u" />
                <VThumb $top={0} $h={53} />
                <Grow />
                <ScrollBtn $dir="d" />
              </VBar>
            </EditorTop>
            <EditorHBar>
              <ScrollBtn $dir="l" $off />
              <Grow />
              <ScrollBtn $dir="r" $off />
              <Corner />
            </EditorHBar>
          </EditorMain>
          <Ruler>
            <RulerMark $top={54} />
            <RulerMark $top={56} $grey />
            <RulerMark $top={5} />
          </Ruler>
        </EditorBody>
      </EditorView>

      <ConsoleView>
        <TabBar>
          <Tab $on $w={87} $gap={4}>
            <Icon n="console" />Console
            <TabClose><CloseX /></TabClose>
          </Tab>
          <ViewTools>
            {renderTools(consoleTools)}
            <MinBtn />
            <MaxBtn />
          </ViewTools>
        </TabBar>
        <ConsoleName>lab02</ConsoleName>
        <ConsoleBody>
          <ConsoleText>{'CORTEX_M4_0: GEL Output:\nMemory Map Initialization Complete'}</ConsoleText>
          <VBar>
            <ScrollBtn $dir="u" $off />
            <Grow />
            <ScrollBtn $dir="d" $off />
          </VBar>
        </ConsoleBody>
      </ConsoleView>

      <StatusBar>
        <StatusBtn><Icon n="switchWs" /></StatusBtn>
        <StatusCell $w={86}>Writable</StatusCell>
        <StatusCell $w={81}>Smart Insert</StatusCell>
        <StatusCell $w={79} $pad={8}>3 : 27</StatusCell>
        <StatusGrip $w={3} />
        <Tool $w={244} />
        <StatusGrip $w={3} />
        <StatusText $w={66} $pad={3}>Free License</StatusText>
        <StatusGrip $w={3} />
        <StatusText $w={17} $pad={2}>LE</StatusText>
        <StatusGrip $w={3} />
      </StatusBar>
    </Page>
  );
}
